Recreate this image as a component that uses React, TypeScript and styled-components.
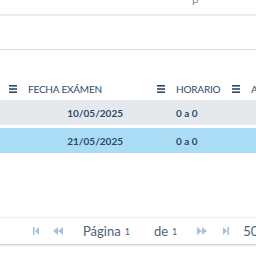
import React from "react";
import styled, { createGlobalStyle } from "styled-components";

const Global = createGlobalStyle`
  html, body {
    margin: 0;
    padding: 0;
    background: #ffffff;
    font-family: Lato, "Open Sans", sans-serif;
  }
`;

const Page = styled.div`
  width: 256px;
  height: 256px;
  overflow: hidden;
  display: flex;
  flex-direction: column;
`;

const TopStrip = styled.div`
  height: 14px;
  position: relative;
  overflow: hidden;
`;

const Cut = styled.span`
  position: absolute;
  left: 192px;
  top: -9px;
  font-size: 12px;
  color: #8a8f96;
`;

const Panel = styled.div`
  border-top: 2px solid #ececec;
  height: 33px;
  border-bottom: 1px solid #dcdcdc;
`;

const Table = styled.div`
  margin-top: 28px;
  display: flex;
  flex-direction: column;
  width: 340px;
`;

const Row = styled.div<{ $bg?: string }>`
  display: grid;
  grid-template-columns: 150px 75px 115px;
  height: ${(p) => (p.$bg ? "25px" : "22px")};
  align-items: center;
  background: ${(p) => p.$bg || "transparent"};
  margin-bottom: ${(p) => (p.$bg ? "3px" : "0")};
`;

const HeadCell = styled.div<{ $pad: number }>`
  display: flex;
  align-items: center;
  gap: 11px;
  padding-left: ${(p) => p.$pad}px;
  font-size: 10px;
  color: #2d4a6b;
  letter-spacing: -0.2px;
  white-space: nowrap;
`;

const Menu = styled.svg`
  width: 8px;
  height: 8px;
  flex: none;
  fill: #2d4a6b;
`;

const DateCell = styled.div`
  text-align: right;
  padding-right: 27px;
  font-size: 10px;
  font-weight: 700;
  color: #2a4a6c;
`;

const TimeCell = styled.div`
  padding-left: 26px;
  font-size: 10px;
  font-weight: 700;
  color: #2a4a6c;
`;

const Spacer = styled.div`
  flex: 1;
`;

const Pager = styled.div`
  height: 26px;
  margin-bottom: 12px;
  border-top: 1px solid #ededed;
  box-shadow: 0 1px 2px rgba(0, 0, 0, 0.25);
  display: flex;
  align-items: center;
  padding-left: 33px;
  font-size: 13px;
  color: #4f5f74;
  white-space: nowrap;
`;

const Nav = styled.svg<{ $w: number; $gap: number }>`
  width: ${(p) => p.$w}px;
  height: 8px;
  flex: none;
  fill: #a9c2da;
  margin-right: ${(p) => p.$gap}px;
`;

const Sep = styled.span`
  width: 1px;
  height: 16px;
  background: #e4e4e4;
  margin-right: 10px;
`;

const Num = styled.span<{ $gap: number }>`
  font-size: 9px;
  margin-left: 4px;
  margin-right: ${(p) => p.$gap}px;
`;

const MenuIcon = () => (
  <Menu viewBox="0 0 8 8">
    <rect x="0" y="0" width="8" height="1.6" />
    <rect x="0" y="3.2" width="8" height="1.6" />
    <rect x="0" y="6.4" width="8" height="1.6" />
  </Menu>
);

const rows = [
  { fecha: "10/05/2025", horario: "0 a 0", bg: "#e5e9ee" },
  { fecha: "21/05/2025", horario: "0 a 0", bg: "#abdcf6" },
];

export default function App() {
  return (
    <Page>
      <Global />
      <TopStrip>
        <Cut>p</Cut>
      </TopStrip>
      <Panel />
      <Table>
        <Row>
          <HeadCell $pad={9}>
            <MenuIcon />
            FECHA EXÁMEN
          </HeadCell>
          <HeadCell $pad={7}>
            <MenuIcon />
            HORARIO
          </HeadCell>
          <HeadCell $pad={7}>
            <MenuIcon />
            ASISTENCIA
          </HeadCell>
        </Row>
        {rows.map((r) => (
          <Row key={r.fecha} $bg={r.bg}>
            <DateCell>{r.fecha}</DateCell>
            <TimeCell>{r.horario}</TimeCell>
            <div />
          </Row>
        ))}
      </Table>
      <Spacer />
      <Pager>
        <Nav $w={6} $gap={14} viewBox="0 0 6 8">
          <rect x="0" y="0" width="1.6" height="8" />
          <polygon points="6,0 2,4 6,8" />
        </Nav>
        <Nav $w={10} $gap={10} viewBox="0 0 10 8">
          <polygon points="5,0 0,4 5,8" />
          <polygon points="10,0 5,4 10,8" />
        </Nav>
        <Sep />
        Página<Num $gap={24}>1</Num>
        de<Num $gap={10}>1</Num>
        <Sep />
        <Nav $w={10} $gap={16} viewBox="0 0 10 8">
          <polygon points="0,0 5,4 0,8" />
          <polygon points="5,0 10,4 5,8" />
        </Nav>
        <Nav $w={6} $gap={14} viewBox="0 0 6 8">
          <polygon points="0,0 4,4 0,8" />
          <rect x="4.4" y="0" width="1.6" height="8" />
        </Nav>
        50
      </Pager>
    </Page>
  );
}
